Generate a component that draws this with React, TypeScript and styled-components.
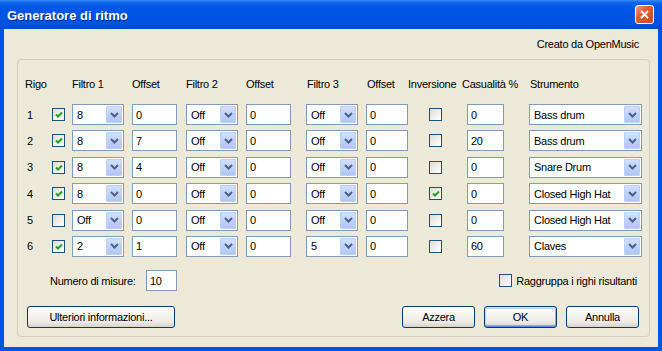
import { Fragment } from 'react';
import styled, { createGlobalStyle } from 'styled-components';

const GlobalStyle = createGlobalStyle`
  html, body {
    margin: 0;
    padding: 0;
    background: #ffffff;
  }
  body {
    font-family: 'Liberation Sans', Tahoma, Arial, sans-serif;
    font-size: 11px;
    letter-spacing: -0.25px;
    color: #000000;
  }
`;

const COLUMNS = '27px 20px 60px 54px 60px 60px 60px 42px 54px 67px 113px';

const Window = styled.div`
  width: 662px;
  height: 351px;
  display: flex;
  flex-direction: column;
  background: #0054e3;
  overflow: hidden;
`;

const TitleBar = styled.div`
  height: 29px;
  flex: none;
  display: flex;
  align-items: center;
  padding: 0 8px 0 7px;
  background: linear-gradient(
    180deg,
    #3a8cf5 0%,
    #1169ec 8%,
    #0058e6 22%,
    #0054e3 55%,
    #0052df 85%,
    #0048d0 100%
  );
`;

const Title = styled.span`
  font: bold 13px 'Liberation Sans', Arial, sans-serif;
  letter-spacing: 0;
  color: #ffffff;
  text-shadow: 1px 1px 0 #0a2a8a;
  padding-top: 1px;
`;

const CloseButton = styled.div`
  margin-left: auto;
  width: 19px;
  height: 19px;
  box-sizing: border-box;
  border: 1px solid #ffffff;
  border-radius: 3px;
  background: linear-gradient(135deg, #f0a088 0%, #e0603a 35%, #cc4520 100%);
  display: flex;
  align-items: center;
  justify-content: center;
`;

const Body = styled.div`
  flex: 1;
  margin: 0 4px 4px;
  background: #ece9d8;
  display: flex;
  flex-direction: column;
  padding: 0 8px 10px 13px;
`;

const Credit = styled.div`
  height: 30px;
  flex: none;
  display: flex;
  align-items: center;
  justify-content: flex-end;
  padding-right: 11px;
`;

const GroupBox = styled.div`
  flex: 1;
  border: 1px solid #d0d0bf;
  border-radius: 4px;
  padding: 17px 7px 8px 7px;
  display: flex;
  flex-direction: column;
`;

const HeaderGrid = styled.div`
  display: grid;
  grid-template-columns: ${COLUMNS};
  height: 14px;
  align-items: center;
`;

const HeaderCell = styled.span<{ $pad?: number }>`
  white-space: nowrap;
  padding-left: ${({ $pad }) => $pad ?? 0}px;
`;

const RowsGrid = styled.div`
  display: grid;
  grid-template-columns: ${COLUMNS};
  grid-auto-rows: 21px;
  row-gap: 5.4px;
  align-items: center;
  margin-top: 13px;
`;

const RowNum = styled.span`
  padding-left: 2px;
`;

const Cell = styled.div<{ $pad?: number }>`
  display: flex;
  align-items: center;
  padding-left: ${({ $pad }) => $pad ?? 0}px;
`;

const ComboBox = styled.div<{ $w: number }>`
  width: ${({ $w }) => $w}px;
  height: 21px;
  box-sizing: border-box;
  border: 1px solid #7f9db9;
  background: #ffffff;
  display: flex;
  align-items: center;
  padding-left: 4px;
`;

const ComboValue = styled.span`
  flex: 1;
  white-space: nowrap;
  overflow: hidden;
`;

const ComboButton = styled.div`
  width: 16px;
  height: 17px;
  margin-right: 1px;
  box-sizing: border-box;
  border: 1px solid #bccff7;
  border-radius: 1px;
  background: linear-gradient(180deg, #d2e0fd 0%, #c1d3fb 45%, #b1c6f6 100%);
  display: flex;
  align-items: center;
  justify-content: center;
`;

const TextBox = styled.div<{ $w: number }>`
  width: ${({ $w }) => $w}px;
  height: 21px;
  box-sizing: border-box;
  border: 1px solid #7f9db9;
  background: #ffffff;
  display: flex;
  align-items: center;
  padding-left: 3px;
`;

const CheckBox = styled.div`
  width: 13px;
  height: 13px;
  flex: none;
  box-sizing: border-box;
  border: 1px solid #1c5180;
  background: linear-gradient(135deg, #dcdcd7 0%, #f2f2ee 60%, #ffffff 100%);
  display: flex;
  align-items: center;
  justify-content: center;
`;

const OptionsRow = styled.div`
  display: flex;
  align-items: center;
  height: 20px;
  margin-top: 14px;
  padding: 0 5px 0 25px;
`;

const MeasuresLabel = styled.span`
  width: 96px;
`;

const Spacer = styled.div`
  flex: 1;
`;

const CheckLabel = styled.span`
  margin-left: 4px;
`;

const ButtonRow = styled.div`
  display: flex;
  align-items: center;
  margin-top: 15px;
  padding: 0 3px 0 2px;
  gap: 9px;
`;

const Button = styled.div<{ $w: number; $default?: boolean }>`
  width: ${({ $w }) => $w}px;
  height: 22px;
  box-sizing: border-box;
  border: 1px solid #003c74;
  border-radius: 3px;
  background: linear-gradient(180deg, #ffffff 0%, #f5f4ef 35%, #ecebe5 75%, #d8d2c6 100%);
  box-shadow: ${({ $default }) =>
    $default
      ? 'inset 0 1px 0 #cee7ff, inset 0 -1px 0 #6982ee, inset 1px 0 0 #bcd4f6, inset -1px 0 0 #89ade4, inset 0 2px 0 #bcd4f6, inset 0 -2px 0 #89ade4'
      : 'none'};
  display: flex;
  align-items: center;
  justify-content: center;
`;

type Row = {
  on: boolean;
  f1: string;
  o1: string;
  f2: string;
  o2: string;
  f3: string;
  o3: string;
  inv: boolean;
  rnd: string;
  instr: string;
};

const ROWS: Row[] = [
  { on: true, f1: '8', o1: '0', f2: 'Off', o2: '0', f3: 'Off', o3: '0', inv: false, rnd: '0', instr: 'Bass drum' },
  { on: true, f1: '8', o1: '7', f2: 'Off', o2: '0', f3: 'Off', o3: '0', inv: false, rnd: '20', instr: 'Bass drum' },
  { on: true, f1: '8', o1: '4', f2: 'Off', o2: '0', f3: 'Off', o3: '0', inv: false, rnd: '0', instr: 'Snare Drum' },
  { on: true, f1: '8', o1: '0', f2: 'Off', o2: '0', f3: 'Off', o3: '0', inv: true, rnd: '0', instr: 'Closed High Hat' },
  { on: false, f1: 'Off', o1: '0', f2: 'Off', o2: '0', f3: 'Off', o3: '0', inv: false, rnd: '0', instr: 'Closed High Hat' },
  { on: true, f1: '2', o1: '1', f2: 'Off', o2: '0', f3: '5', o3: '0', inv: false, rnd: '60', instr: 'Claves' },
];

function Chevron() {
  return (
    <svg width="9" height="6" viewBox="0 0 9 6">
      <polyline points="1,1 4.5,4.5 8,1" fill="none" stroke="#4d6185" strokeWidth="2" />
    </svg>
  );
}

function Combo({ value, w }: { value: string; w: number }) {
  return (
    <ComboBox $w={w}>
      <ComboValue>{value}</ComboValue>
      <ComboButton>
        <Chevron />
      </ComboButton>
    </ComboBox>
  );
}

function Check({ checked }: { checked?: boolean }) {
  return (
    <CheckBox>
      {checked && (
        <svg width="8" height="7" viewBox="0 0 8 7">
          <polyline points="1,3.5 3,5.5 7,1.5" fill="none" stroke="#21a121" strokeWidth="2" />
        </svg>
      )}
    </CheckBox>
  );
}

export default function App() {
  return (
    <>
      <GlobalStyle />
      <Window>
        <TitleBar>
          <Title>Generatore di ritmo</Title>
          <CloseButton>
            <svg width="9" height="9" viewBox="0 0 9 9">
              <path d="M1 1 L8 8 M8 1 L1 8" stroke="#ffffff" strokeWidth="2" />
            </svg>
          </CloseButton>
        </TitleBar>

        <Body>
          <Credit>Creato da OpenMusic</Credit>

          <GroupBox>
            <HeaderGrid>
              <HeaderCell>Rigo</HeaderCell>
              <HeaderCell />
              <HeaderCell>Filtro 1</HeaderCell>
              <HeaderCell>Offset</HeaderCell>
              <HeaderCell>Filtro 2</HeaderCell>
              <HeaderCell>Offset</HeaderCell>
              <HeaderCell $pad={1}>Filtro 3</HeaderCell>
              <HeaderCell $pad={1}>Offset</HeaderCell>
              <HeaderCell>Inversione</HeaderCell>
              <HeaderCell>Casualità %</HeaderCell>
              <HeaderCell $pad={1}>Strumento</HeaderCell>
            </HeaderGrid>

            <RowsGrid>
              {ROWS.map((r, i) => (
                <Fragment key={i}>
                  <RowNum>{i + 1}</RowNum>
                  <Cell>
                    <Check checked={r.on} />
                  </Cell>
                  <Cell>
                    <Combo value={r.f1} w={52} />
                  </Cell>
                  <Cell>
                    <TextBox $w={45}>{r.o1}</TextBox>
                  </Cell>
                  <Cell>
                    <Combo value={r.f2} w={52} />
                  </Cell>
                  <Cell>
                    <TextBox $w={45}>{r.o2}</TextBox>
                  </Cell>
                  <Cell>
                    <Combo value={r.f3} w={52} />
                  </Cell>
                  <Cell>
                    <TextBox $w={45}>{r.o3}</TextBox>
                  </Cell>
                  <Cell $pad={21}>
                    <Check checked={r.inv} />
                  </Cell>
                  <Cell $pad={5}>
                    <TextBox $w={37}>{r.rnd}</TextBox>
                  </Cell>
                  <Cell>
                    <Combo value={r.instr} w={113} />
                  </Cell>
                </Fragment>
              ))}
            </RowsGrid>

            <OptionsRow>
              <MeasuresLabel>Numero di misure:</MeasuresLabel>
              <TextBox $w={31}>10</TextBox>
              <Spacer />
              <Check />
              <CheckLabel>Raggruppa i righi risultanti</CheckLabel>
            </OptionsRow>

            <ButtonRow>
              <Button $w={148}>Ulteriori informazioni...</Button>
              <Spacer />
              <Button $w={73}>Azzera</Button>
              <Button $w={73} $default>
                OK
              </Button>
              <Button $w={73}>Annulla</Button>
            </ButtonRow>
          </GroupBox>
        </Body>
      </Window>
    </>
  );
}
